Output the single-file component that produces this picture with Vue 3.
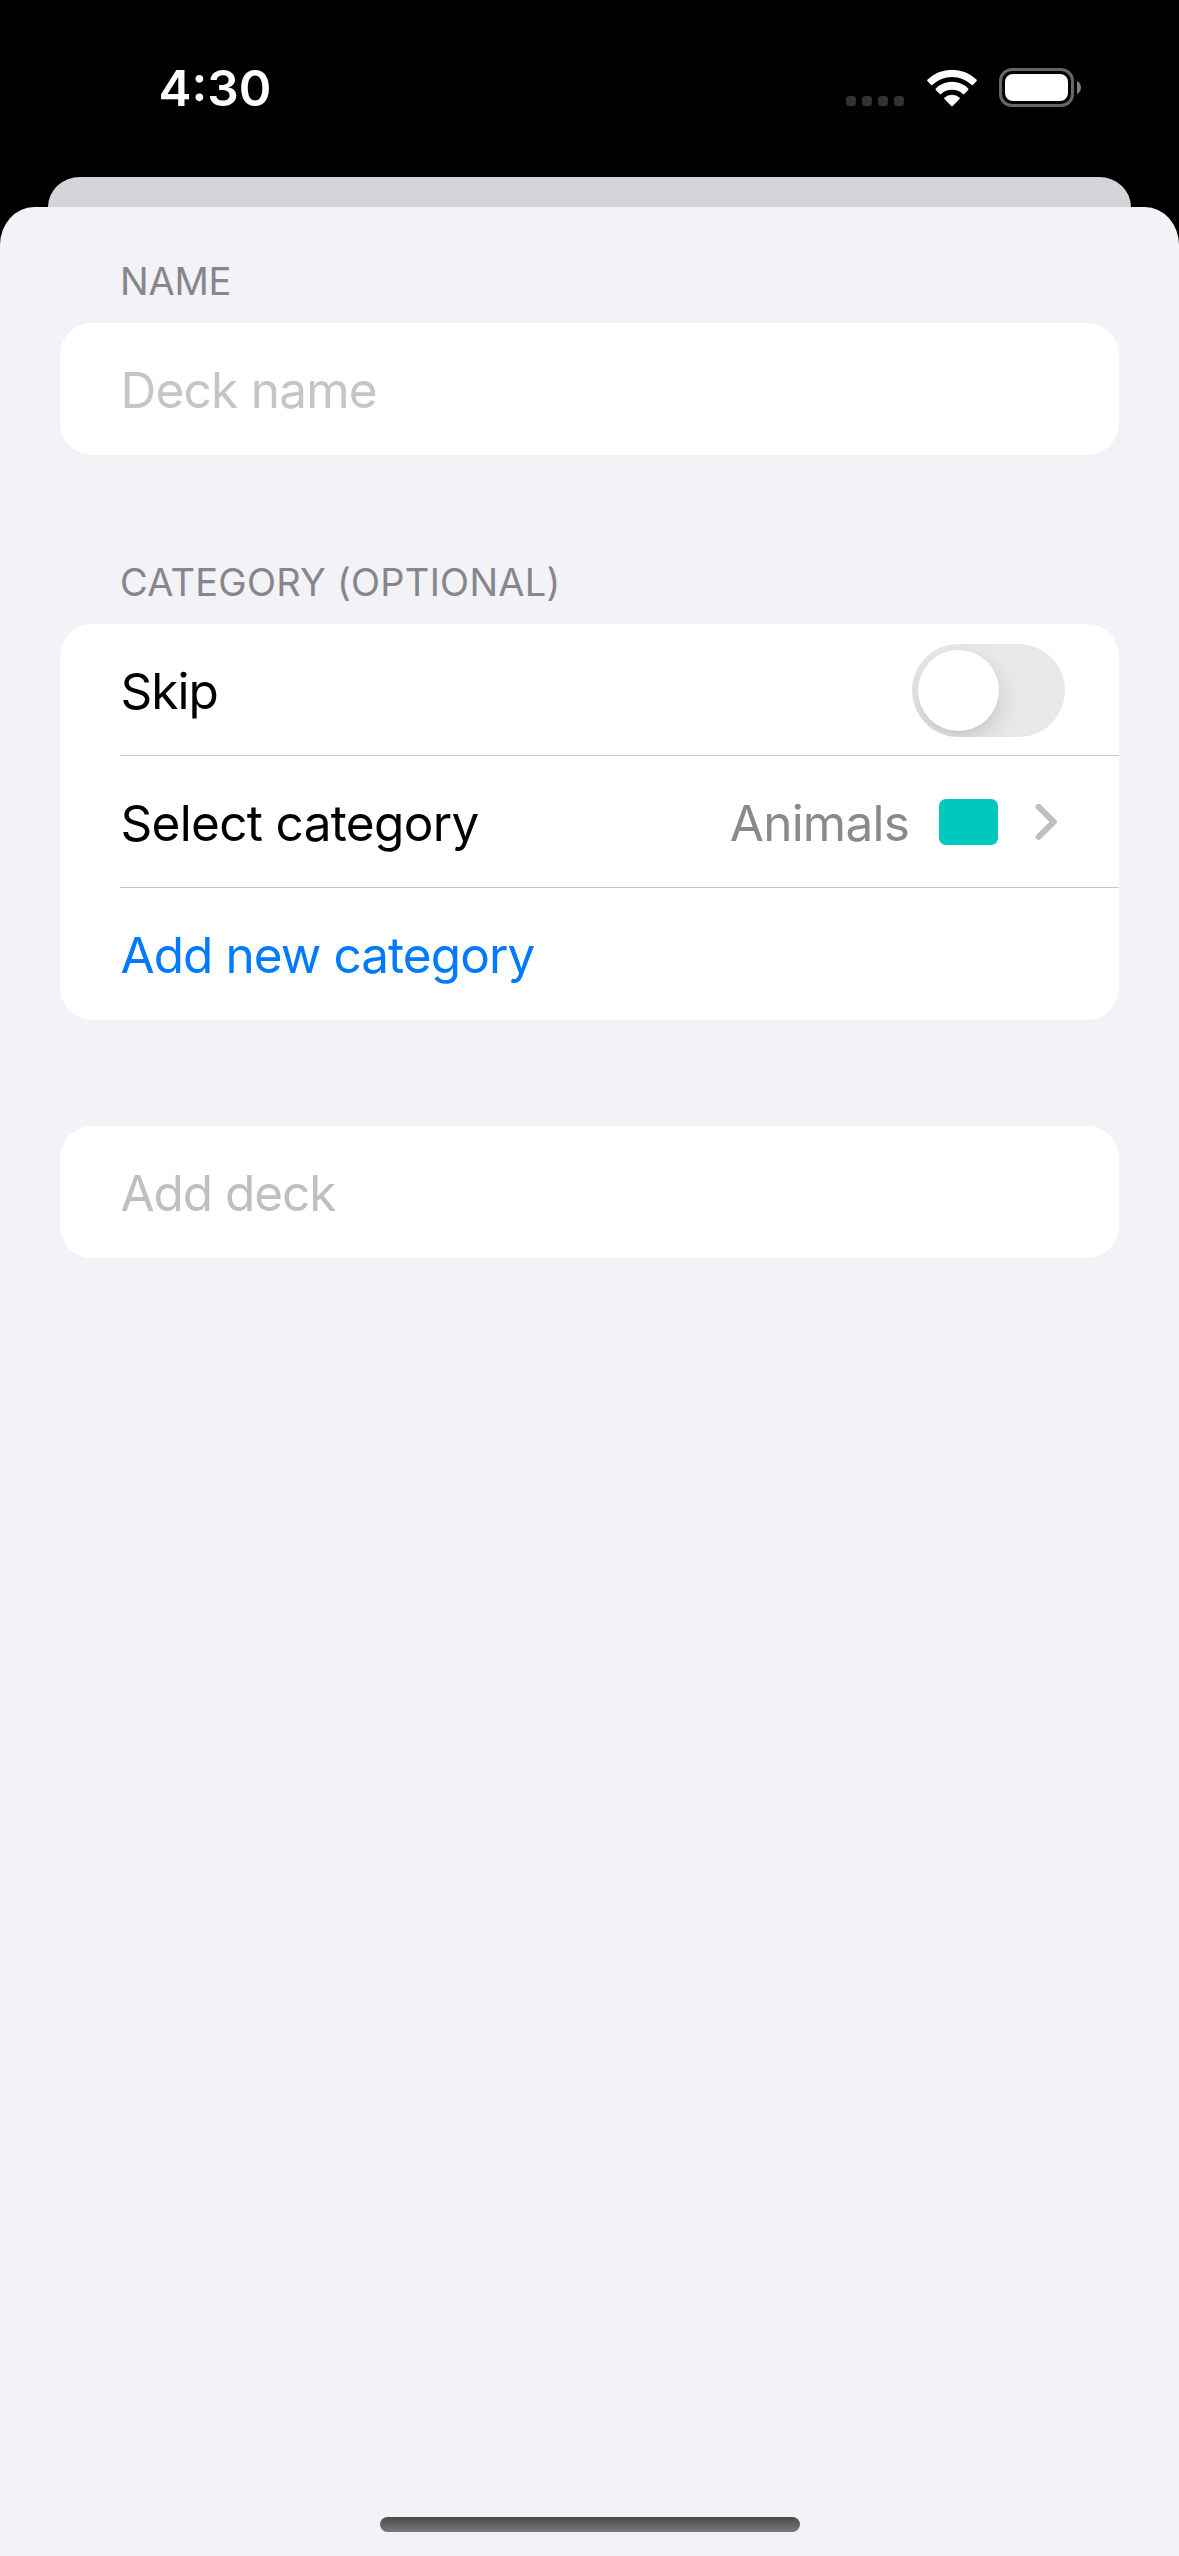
<script setup>
import { ref } from 'vue'

const time = '4:30'
const deckName = ref('')
const skip = ref(false)
const category = { name: 'Animals', color: '#00c8bf' }
</script>

<template>
  <main class="screen">
    <header class="status">
      <time class="clock">{{ time }}</time>
      <div class="indicators">
        <div class="signal"><i v-for="n in 4" :key="n"></i></div>
        <svg class="wifi" width="50" height="38" viewBox="0 0 50 38">
          <g fill="#fff">
            <path d="M0.3 10.7 A35.5 35.5 0 0 1 49.7 10.7 Q50.2 11.4 49.6 12.1 L45.9 15.9 Q45.2 16.4 44.5 15.8 A28.5 28.5 0 0 0 5.5 15.8 Q4.8 16.4 4.1 15.9 L0.4 12.1 Q-0.2 11.4 0.3 10.7Z" />
            <path d="M8.8 19.4 A23 23 0 0 1 41.2 19.4 Q41.8 20.2 41.2 20.9 L37.3 24.9 Q36.6 25.5 35.9 24.9 A16.2 16.2 0 0 0 14.1 24.9 Q13.4 25.5 12.7 24.9 L8.8 20.9 Q8.2 20.2 8.8 19.4Z" />
            <path d="M17.5 28.6 A11 11 0 0 1 32.5 28.6 Q33.2 29.4 32.5 30.1 L25.7 37 Q25 37.7 24.3 37 L17.5 30.1 Q16.8 29.4 17.5 28.6Z" />
          </g>
        </svg>
        <svg class="battery" width="82" height="39" viewBox="0 0 82 39">
          <rect x="1.5" y="1.5" width="72" height="36" rx="11.5" fill="none" stroke="#666" stroke-width="3" />
          <rect x="6" y="6" width="63" height="27" rx="8" fill="#fff" />
          <path d="M78 13 C80.8 14.4 82 17 82 19.5 C82 22 80.8 24.6 78 26Z" fill="#808080" />
        </svg>
      </div>
    </header>

    <div class="back-sheet"></div>

    <section class="sheet">
      <h2 class="label label-name">NAME</h2>
      <div class="card">
        <div class="row">
          <span class="text placeholder">{{ deckName || 'Deck name' }}</span>
        </div>
      </div>

      <h2 class="label label-category">CATEGORY (OPTIONAL)</h2>
      <div class="card">
        <div class="row">
          <span class="text skip">Skip</span>
          <div class="toggle" :class="{ on: skip }" role="switch" :aria-checked="skip" @click="skip = !skip">
            <div class="knob"></div>
          </div>
        </div>
        <div class="row">
          <span class="text select">Select category</span>
          <div class="value">
            <span class="text animals">{{ category.name }}</span>
            <i class="swatch" :style="{ background: category.color }"></i>
            <svg class="chevron" width="24" height="38" viewBox="0 0 24 38">
              <path d="M4.6 3.9 L19.8 18.9 L4.6 33.9" fill="none" stroke="#bfbfbf" stroke-width="6" stroke-linecap="round" stroke-linejoin="round" />
            </svg>
          </div>
        </div>
        <div class="row">
          <span class="text link">Add new category</span>
        </div>
      </div>

      <div class="card submit">
        <div class="row">
          <span class="text disabled">Add deck</span>
        </div>
      </div>

      <div class="home"></div>
    </section>
  </main>
</template>

<style>
body {
  margin: 0;
  background: #000;
}
</style>

<style scoped>
.screen {
  width: 1179px;
  height: 2556px;
  background: #000;
  display: flex;
  flex-direction: column;
  overflow: hidden;
  font-family: Inter, "Liberation Sans", sans-serif;
}
.status {
  height: 177px;
  flex: none;
  box-sizing: border-box;
  display: flex;
  justify-content: space-between;
  align-items: flex-start;
  padding: 68px 98px 0 158.5px;
}
.clock {
  color: #fff;
  font-size: 49.5px;
  font-weight: 580;
  line-height: 40px;
}
.indicators {
  display: flex;
  align-items: flex-start;
}
.signal {
  display: flex;
  gap: 6px;
  margin: 28px 23px 0 0;
}
.signal i {
  width: 10px;
  height: 10px;
  border-radius: 3.5px;
  background: #333;
}
.wifi {
  margin: 0.5px 22px 0 0;
  overflow: visible;
}
.back-sheet {
  flex: none;
  height: 30px;
  margin: 0 48px;
  background: #d5d4d9;
  border-radius: 32px 32px 0 0 / 30px 30px 0 0;
}
.sheet {
  flex: 1;
  box-sizing: border-box;
  display: flex;
  flex-direction: column;
  padding: 0 60px 24px;
  background: #f2f2f7;
  border-radius: 34px 34px 0 0 / 38px 38px 0 0;
}
.label {
  flex: none;
  margin: 0;
  padding-left: 60px;
  color: #86868b;
  font-size: 38px;
  font-weight: 400;
  line-height: 40px;
}
.label-name {
  margin-top: 54px;
  margin-bottom: 22px;
  letter-spacing: -0.2px;
}
.label-category {
  margin-top: 107px;
  margin-bottom: 22px;
  letter-spacing: 0.24px;
}
.card {
  flex: none;
  background: #fff;
  border-radius: 32px;
}
.row {
  height: 132px;
  box-sizing: border-box;
  margin-left: 60px;
  padding-right: 54px;
  display: flex;
  align-items: center;
  justify-content: space-between;
}
.row + .row {
  box-shadow: 0 -1px 0 #c6c6c8;
}
.text {
  padding-top: 2px;
  padding-left: 0.5px;
  font-size: 49.5px;
  line-height: 60px;
  white-space: nowrap;
  color: #000;
}
.placeholder {
  color: #c5c5c7;
  letter-spacing: -0.76px;
}
.skip {
  letter-spacing: -0.95px;
}
.select {
  letter-spacing: -0.68px;
}
.link {
  color: #007aff;
  letter-spacing: -0.93px;
}
.disabled {
  color: #bfbfbf;
  letter-spacing: -1.07px;
}
.value {
  display: flex;
  align-items: center;
  margin-right: 7px;
}
.animals {
  color: #8a8a8e;
  letter-spacing: -0.78px;
  margin-right: 30px;
}
.swatch {
  width: 59px;
  height: 46px;
  border-radius: 7px;
  margin-right: 36px;
}
.toggle {
  width: 153px;
  height: 93px;
  box-sizing: border-box;
  padding: 6px;
  border-radius: 47px;
  background: #e9e9eb;
  overflow: hidden;
}
.knob {
  width: 81px;
  height: 81px;
  border-radius: 50%;
  background: #fff;
  box-shadow: 0 9px 24px rgba(0, 0, 0, 0.15), 0 3px 3px rgba(0, 0, 0, 0.02);
}
.toggle.on {
  background: #34c759;
}
.toggle.on .knob {
  margin-left: 60px;
}
.submit {
  margin-top: 106px;
}
.home {
  width: 420px;
  height: 15px;
  margin: auto auto 0;
  border-radius: 8px;
  background: linear-gradient(#4a4a4a, #7a7a7a);
}
</style>
